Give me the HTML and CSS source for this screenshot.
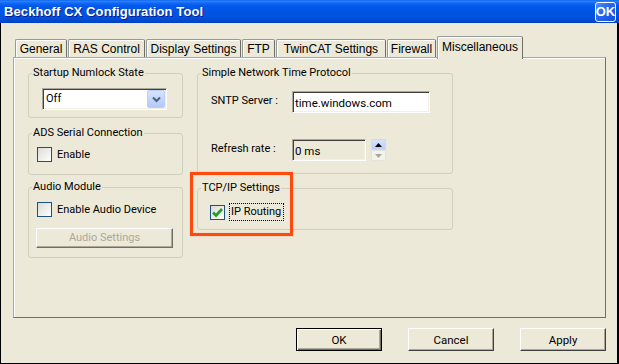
FILE: index.html
```html
<!DOCTYPE html>
<html>
<head>
<meta charset="utf-8">
<link rel="stylesheet" href="styles.css">
</head>
<body>
<div class="window">
  <div class="titlebar">
    <span class="title">Beckhoff CX Configuration Tool</span>
    <span class="title-ok">OK</span>
  </div>
  <div class="client">
    <div class="tabs">
      <div class="tab t-general">General</div>
      <div class="tab t-ras">RAS Control</div>
      <div class="tab t-display">Display Settings</div>
      <div class="tab t-ftp">FTP</div>
      <div class="tab t-twincat">TwinCAT Settings</div>
      <div class="tab t-firewall">Firewall</div>
      <div class="tab t-misc active">Miscellaneous</div>
    </div>
    <div class="panel">
      <div class="col-left">
        <div class="group g-numlock">
          <span class="group-title">Startup Numlock State</span>
          <div class="combo">
            <span class="combo-text">Off</span>
            <span class="combo-btn">
              <svg width="9" height="7" viewBox="0 0 9 7"><path d="M1 1.5 L4.5 5 L8 1.5" fill="none" stroke="#4D6185" stroke-width="2"/></svg>
            </span>
          </div>
        </div>
        <div class="group g-ads">
          <span class="group-title">ADS Serial Connection</span>
          <label class="check-row"><span class="check"></span><span>Enable</span></label>
        </div>
        <div class="group g-audio">
          <span class="group-title">Audio Module</span>
          <label class="check-row"><span class="check"></span><span>Enable Audio Device</span></label>
          <div class="btn btn-audio">Audio Settings</div>
        </div>
      </div>
      <div class="col-right">
        <div class="group g-sntp">
          <span class="group-title">Simple Network Time Protocol</span>
          <div class="field-row">
            <span class="field-label">SNTP Server :</span>
            <span class="textbox tb-server">time.windows.com</span>
          </div>
          <div class="field-row row-refresh">
            <span class="field-label">Refresh rate :</span>
            <span class="textbox tb-refresh">0 ms</span>
            <span class="spin">
              <span class="spin-up"><svg width="7" height="4" viewBox="0 0 7 4"><path d="M0 4 L3.5 0 L7 4 Z" fill="#000"/></svg></span>
              <span class="spin-down"><svg width="7" height="4" viewBox="0 0 7 4"><path d="M0 0 L3.5 4 L7 0 Z" fill="#ACA899"/></svg></span>
            </span>
          </div>
        </div>
        <div class="group g-tcp">
          <span class="group-title">TCP/IP Settings</span>
          <label class="check-row tcp-row">
            <span class="check checked"><svg width="13" height="13" viewBox="0 0 13 13"><path d="M2 6.5 L5 9.5 L11 3" fill="none" stroke="#21A121" stroke-width="2.6"/></svg></span>
            <span class="focus">IP Routing</span>
          </label>
        </div>
      </div>
    </div>
    <div class="buttons">
      <div class="btn btn-default">OK</div>
      <div class="btn">Cancel</div>
      <div class="btn">Apply</div>
    </div>
  </div>
  <div class="highlight"></div>
</div>
</body>
</html>
```
FILE: styles.css
```css
* { box-sizing: border-box; }
html, body { margin: 0; padding: 0; }
body {
  font-family: "Liberation Sans", Arial, sans-serif;
  font-size: 12px;
  color: #000;
  background: #ECE9D8;
}
.window {
  position: relative;
  width: 619px;
  height: 364px;
  display: flex;
  flex-direction: column;
  background: #ECE9D8;
  overflow: hidden;
}
.titlebar {
  height: 23px;
  flex: none;
  display: flex;
  align-items: center;
  justify-content: space-between;
  padding: 0 3px 0 4px;
  background: linear-gradient(to bottom, #0A5BE6 0px, #2B86FF 1px, #1468F3 3px, #0058EB 6px, #0054E3 12px, #0050DD 18px, #0045C8 22px, #003FBF 23px);
}
.title {
  color: #fff;
  font-weight: bold;
  font-size: 13px;
  line-height: 15px;
  letter-spacing: 0.1px;
  text-shadow: 1px 1px 0 #0A1B8A;
}
.title-ok {
  width: 21px;
  height: 20px;
  border: 1px solid #fff;
  border-radius: 3px;
  background: linear-gradient(135deg, #4A8EFF 0%, #2665EC 45%, #1150E0 100%);
  color: #fff;
  font-weight: bold;
  font-size: 13px;
  line-height: 16px;
  display: flex;
  align-items: center;
  justify-content: center;
}
.client {
  flex: 1;
  display: flex;
  flex-direction: column;
  border-left: 1px solid #000;
  border-right: 2px solid #000;
  border-bottom: 1px solid #000;
  padding: 13px 11px 0 12px;
}
.tabs {
  display: flex;
  align-items: flex-end;
  gap: 1px;
  height: 21px;
  padding-left: 2px;
  position: relative;
  z-index: 1;
  flex: none;
}
.tab {
  height: 18px;
  border: 1px solid #919B9C;
  border-bottom: none;
  border-right-color: #716F64;
  border-radius: 2px 2px 0 0;
  box-shadow: inset 1px 1px 0 #fff;
  background: #ECE9D8;
  display: flex;
  justify-content: center;
  align-items: flex-start;
  padding-top: 2px;
  line-height: 14px;
  white-space: nowrap;
}
.tab.active {
  height: 23px;
  margin-bottom: -2px;
  padding-top: 3px;
}
.t-general { width: 52px; }
.t-ras { width: 77px; }
.t-display { width: 95px; }
.t-ftp { width: 33px; }
.t-twincat { width: 110px; }
.t-firewall { width: 49px; }
.t-misc { width: 86px; }

.panel {
  width: 593px;
  height: 261px;
  flex: none;
  border: 1px solid;
  border-color: #ACA899 #716F64 #716F64 #ACA899;
  box-shadow: inset 1px 1px 0 #fff;
  display: flex;
  gap: 14px;
  padding: 15px 0 0 14px;
  font-family: Roboto, "Liberation Sans", sans-serif;
  font-size: 11px;
}
.col-left {
  width: 155px;
  flex: none;
  display: flex;
  flex-direction: column;
}
.col-right {
  width: 256px;
  flex: none;
  display: flex;
  flex-direction: column;
}
.group {
  position: relative;
  border: 1px solid #D0D0BF;
  border-radius: 3px;
  flex: none;
}
.group-title {
  position: absolute;
  top: -8px;
  left: 3px;
  padding: 0 1px;
  background: #ECE9D8;
  line-height: 14px;
  white-space: nowrap;
}
.g-numlock { height: 45px; padding: 14px 0 0 13px; }
.g-ads { margin-top: 15px; height: 42px; padding: 13px 0 0 8px; }
.g-audio { margin-top: 12px; height: 71px; padding: 14px 0 0 8px; }
.g-sntp { height: 101px; padding: 17px 0 0 13px; }
.g-tcp { margin-top: 14px; height: 42px; padding: 14px 0 0 12px; }

.combo {
  width: 125px;
  height: 22px;
  border: 1px solid;
  border-color: #ACA899 #fff #fff #ACA899;
  box-shadow: inset 1px 1px 0 #404040, inset -1px -1px 0 #F1EFE2;
  background: #fff;
  display: flex;
  align-items: center;
  padding: 1px 1px 1px 2px;
}
.combo-text {
  flex: 1;
  padding-left: 1px;
  line-height: 14px;
}
.combo-btn {
  width: 18px;
  height: 18px;
  border: 1px solid #BAD0FB;
  border-radius: 2px;
  background: linear-gradient(to bottom, #D6E3FD 0%, #C1D3FB 60%, #B4C9F8 100%);
  display: flex;
  align-items: center;
  justify-content: center;
}
.check-row {
  display: flex;
  align-items: center;
  gap: 5px;
  height: 15px;
  line-height: 14px;
  white-space: nowrap;
}
.check {
  width: 15px;
  height: 15px;
  flex: none;
  border: 1px solid #1C5180;
  background: linear-gradient(135deg, #DCDCD7 0%, #F4F4F0 70%, #FFFFFF 100%);
  display: flex;
  align-items: center;
  justify-content: center;
}
.tcp-row {
  height: 18px;
  gap: 4px;
}
.focus {
  height: 18px;
  border: 1px dotted #000;
  padding: 1px 2px 0 1px;
  line-height: 14px;
}
.btn {
  width: 86px;
  height: 23px;
  flex: none;
  border: 1px solid;
  border-color: #fff #404040 #404040 #fff;
  box-shadow: inset -1px -1px 0 #ACA899;
  background: #ECE9D8;
  display: flex;
  align-items: center;
  justify-content: center;
  line-height: 14px;
}
.btn-default {
  border-color: #000;
  box-shadow: inset 1px 1px 0 #fff, inset -1px -1px 0 #716F64, inset -2px -2px 0 #ACA899;
}
.btn-audio {
  width: 137px;
  height: 20px;
  margin-top: 11px;
  margin-left: -1px;
  color: #ACA899;
  border-color: #fff #716F64 #716F64 #fff;
  box-shadow: inset -1px -1px 0 #ACA899;
}
.field-row {
  display: flex;
  align-items: center;
  height: 22px;
}
.row-refresh { margin-top: 26px; }
.field-label {
  width: 81px;
  flex: none;
  line-height: 14px;
  margin-top: -3px;
}
.textbox {
  height: 22px;
  border: 1px solid;
  border-color: #ACA899 #fff #fff #ACA899;
  box-shadow: inset 1px 1px 0 #404040, inset -1px -1px 0 #F1EFE2;
  display: flex;
  align-items: center;
  padding: 1px 2px 0 2px;
  line-height: 14px;
  white-space: nowrap;
}
.tb-server { width: 138px; background: #fff; font-size: 11.5px; }
.tb-refresh { width: 74px; background: #ECE9D8; font-size: 11.5px; }
.spin {
  display: flex;
  flex-direction: column;
  margin-left: 5px;
  width: 15px;
}
.spin-up, .spin-down {
  height: 11px;
  display: flex;
  align-items: center;
  justify-content: center;
}
.spin-up {
  background: linear-gradient(to bottom, #D6E3FD, #BACEF9);
  border: 1px solid #C9D8FB;
  border-radius: 1px;
}
.spin-down {
  background: #F3F2EC;
  border: 1px solid #E6E4DA;
  border-radius: 1px;
}
.buttons {
  display: flex;
  justify-content: flex-end;
  gap: 26px;
  margin-top: 10px;
  font-family: Roboto, "Liberation Sans", sans-serif;
  font-size: 11.5px;
}
.highlight {
  position: absolute;
  left: 190px;
  top: 172px;
  width: 103px;
  height: 64px;
  border: 3px solid #FF4A0F;
  box-shadow: 0 0 1px rgba(255, 90, 30, 0.6), inset 0 0 1px rgba(255, 90, 30, 0.6);
  pointer-events: none;
}
```
